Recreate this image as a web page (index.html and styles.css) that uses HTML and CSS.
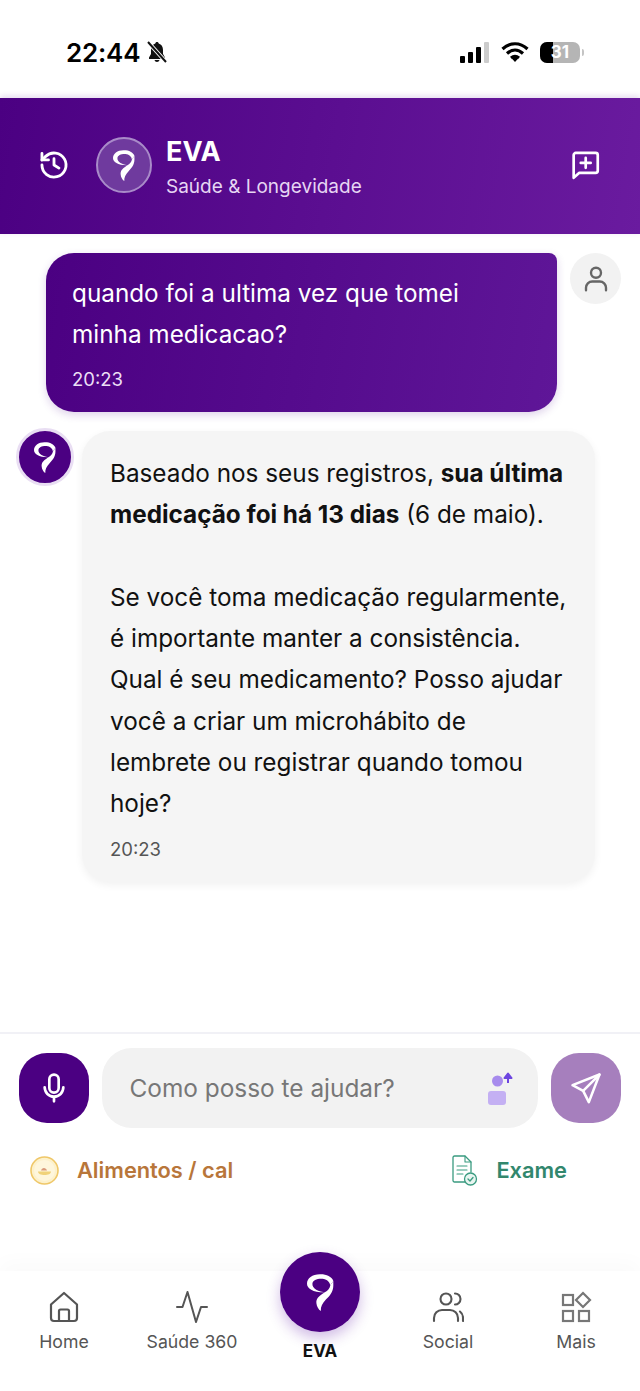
FILE: index.html
```html
<!DOCTYPE html>
<html>
	<head>
		<meta charset="utf-8">
		<title>EVA</title>
		<link rel="stylesheet" href="styles.css">
	</head>
	<body>
		<svg class="defs" width="0" height="0">
			<symbol id="eva-logo" viewBox="0 0 80 107" preserveAspectRatio="none">
				<path d="M41 1C17 0 0 12 0 28c0 14 18 26 56 25-22-2-41-11-40-25 1-10 14-15 30-14 12 1 21 8 23 19 2-5 6-8 9-13C73 8 58 1 41 1z"/>
				<path d="M69 33c-2 9-8 15-15 19-3 2-6 4-9 6-11 7-19 15-17 27 1 9 6 17 13 22-1-12 5-23 15-33 10-10 22-22 22-41 0-5 0-9 0-13-3 5-7 8-9 13z"/>
			</symbol>
		</svg>

		<div class="statusbar">
			<div class="status-left">
				<span class="clock">22:44</span>
				<svg class="bell" viewBox="0 0 24 24" width="24" height="24">
					<path d="M12 2c-1 0-1.600.7-1.700 1.600C7.500 4.400 6 6.800 6 10v4l-2 3.500V19h16v-1.500L18 14v-4c0-3.200-1.500-5.600-4.300-6.400C13.600 2.700 13 2 12 2zM9.500 20c.3 1.300 1.300 2 2.500 2s2.200-.7 2.500-2z" fill="#111"/>
					<path d="M3 2l18 20" stroke="#fff" stroke-width="4"/>
					<path d="M3 2l18 20" stroke="#111" stroke-width="2"/>
				</svg>
			</div>
			<div class="status-right">
				<div class="signal"><i class="b1"></i><i class="b2"></i><i class="b3"></i><i class="b4"></i></div>
				<svg viewBox="0 0 28 22" width="28" height="22">
					<path d="M1.500 8C9 1 19 1 26.500 8M6 12.500c5-4.500 11-4.500 16 0M10 17c2.500-2 5.500-2 8 0" fill="none" stroke="#000" stroke-width="3.200"/>
					<path d="M10.800 17.500L14 21l3.200-3.500c-2-1.500-4.400-1.500-6.400 0z"/>
				</svg>
				<div class="battery"><div class="battery-fill"></div><span>31</span></div>
				<div class="battery-tip"></div>
			</div>
		</div>

		<div class="header">
			<svg class="icon-history" viewBox="0 0 24 24" width="34" height="34" fill="none" stroke="#fff" stroke-width="2" stroke-linecap="round" stroke-linejoin="round">
				<path d="M3.500 12a8.500 8.500 0 1 0 2.600-6.100L3.500 8.400"/>
				<path d="M3.500 3.800v4.600h4.600"/>
				<path d="M12 7.500V12l3.500 2.200"/>
			</svg>
			<div class="header-avatar"><svg class="logo-sm"><use href="#eva-logo"/></svg></div>
			<div class="header-title">
				<div class="title">EVA</div>
				<div class="subtitle">Saúde &amp; Longevidade</div>
			</div>
			<svg class="icon-newchat" viewBox="0 0 24 24" width="34" height="34" fill="none" stroke="#fff" stroke-width="1.900" stroke-linecap="round" stroke-linejoin="round">
				<path d="M4 5a1.500 1.500 0 0 1 1.500-1.500h14A1.500 1.500 0 0 1 21 5v11a1.500 1.500 0 0 1-1.500 1.500H8L4 21z"/>
				<path d="M12.500 7v7M9 10.500h7"/>
			</svg>
		</div>

		<div class="chat">
			<div class="row-user">
				<div class="bubble-user">
					<div class="msg">quando foi a ultima vez que tomei<br>minha medicacao?</div>
					<div class="time">20:23</div>
				</div>
				<div class="user-avatar">
					<svg viewBox="0 0 24 24" width="30" height="30" fill="none" stroke="#666" stroke-width="1.900" stroke-linecap="round">
						<circle cx="12" cy="7" r="4"/>
						<path d="M4 21v-2a5 5 0 0 1 5-5h6a5 5 0 0 1 5 5v2"/>
					</svg>
				</div>
			</div>
			<div class="row-bot">
				<div class="bot-avatar"><svg class="logo-sm"><use href="#eva-logo"/></svg></div>
				<div class="bubble-bot">
					<div class="msg">Baseado nos seus registros, <b>sua última</b><br><b>medicação foi há 13 dias</b> (6 de maio).<br><br>Se você toma medicação regularmente, é importante manter a consistência. Qual é seu medicamento? Posso ajudar você a criar um microhábito de lembrete ou registrar quando tomou hoje?</div>
					<div class="time">20:23</div>
				</div>
			</div>
		</div>

		<div class="composer">
			<div class="input-row">
				<div class="btn-mic">
					<svg viewBox="0 0 24 24" width="32" height="32" fill="none" stroke="#fff" stroke-width="2" stroke-linecap="round">
						<rect x="8.500" y="2" width="7" height="13.500" rx="3.500"/>
						<path d="M5 11.500a7 7 0 0 0 14 0M12 18.500V22"/>
					</svg>
				</div>
				<div class="input">
					<span>Como posso te ajudar?</span>
					<svg viewBox="0 0 26 36" width="26" height="36">
						<circle cx="10.500" cy="11" r="5.500" fill="#a78bed"/>
						<path d="M21 13V6M17.500 8l3.500-4.500L24.500 8z" fill="#6d45e0" stroke="#6d45e0" stroke-width="2" stroke-linejoin="round"/>
						<rect x="1" y="21" width="18" height="14" rx="3" fill="#c4b0f3"/>
					</svg>
				</div>
				<div class="btn-send">
					<svg viewBox="0 0 24 24" width="34" height="34" fill="none" stroke="#fff" stroke-width="1.800" stroke-linejoin="round" stroke-linecap="round">
						<path d="M21.500 2.500L2.500 10l7.500 4 4 8z"/>
						<path d="M10 14L21.500 2.500"/>
					</svg>
				</div>
			</div>
			<div class="quick-row">
				<div class="quick quick-food">
					<svg viewBox="0 0 29 29" width="29" height="29">
						<circle cx="14.500" cy="14.500" r="13.500" fill="#fdf1cb" stroke="#efc768" stroke-width="1.600"/>
						<circle cx="14.500" cy="14.500" r="10.500" fill="#fef6dc"/>
						<path d="M8 15.500h13c0 2.500-3 3.500-6.500 3.500S8 18 8 15.500z" fill="#f0d27a"/>
						<path d="M11 14.500c.8-3.500 5-3.500 6 0z" fill="#d99a7a"/>
					</svg>
					<span>Alimentos / cal</span>
				</div>
				<div class="quick quick-exam">
					<svg viewBox="0 0 26 31" width="26" height="31" fill="none" stroke="#3a9b80" stroke-width="1.300" stroke-linecap="round" stroke-linejoin="round">
						<path d="M14 27H2.500A1.500 1.500 0 0 1 1 25.500v-23A1.500 1.500 0 0 1 2.500 1H13l6 6v10"/>
						<path d="M13 1v6h6M5 11h10M5 15h10M5 19h6" stroke-width="1.100"/>
						<circle cx="18.500" cy="24" r="6" fill="#e8f5f0"/>
						<path d="M16 24l2 2 3-3.500"/>
					</svg>
					<span>Exame</span>
				</div>
			</div>
		</div>

		<div class="nav">
			<div class="nav-item">
				<svg viewBox="0 0 32 32" width="32" height="32" fill="none" stroke="#555" stroke-width="2.200" stroke-linejoin="round">
					<path d="M3 13.500L16 2l13 11.500V27a3 3 0 0 1-3 3H6a3 3 0 0 1-3-3z"/>
					<path d="M11 30V20a1.500 1.500 0 0 1 1.500-1.500h7A1.500 1.500 0 0 1 21 20v10"/>
				</svg>
				<span>Home</span>
			</div>
			<div class="nav-item">
				<svg viewBox="0 0 32 32" width="32" height="32" fill="none" stroke="#555" stroke-width="2" stroke-linecap="round" stroke-linejoin="round">
					<path d="M1 16h5.500L11.500 1 20 31l5-15h6"/>
				</svg>
				<span>Saúde 360</span>
			</div>
			<div class="nav-item nav-eva">
				<div class="eva-circle"><svg class="logo-lg"><use href="#eva-logo"/></svg></div>
				<span>EVA</span>
			</div>
			<div class="nav-item">
				<svg viewBox="0 0 32 32" width="32" height="32" fill="none" stroke="#555" stroke-width="2.100" stroke-linecap="round">
					<circle cx="14" cy="8" r="5.500"/>
					<path d="M23 2.500a5.500 5.500 0 0 1 0 11M2 30v-3a8 8 0 0 1 8-8h8a8 8 0 0 1 8 8v3M28 20.500a8 8 0 0 1 3 6V30"/>
				</svg>
				<span>Social</span>
			</div>
			<div class="nav-item">
				<svg viewBox="0 0 32 32" width="32" height="32" fill="none" stroke="#777" stroke-width="2.200">
					<rect x="3" y="4" width="10" height="10"/>
					<path d="M23 2l7 7-7 7-7-7z"/>
					<rect x="3" y="20" width="10" height="10"/>
					<rect x="19" y="20" width="10" height="10"/>
				</svg>
				<span>Mais</span>
			</div>
		</div>
	</body>
</html>
```

FILE: styles.css
```css
* {
	box-sizing: border-box;
}
html, body {
	margin: 0;
	padding: 0;
	background: #fff;
}
body {
	width: 640px;
	height: 1391px;
	display: flex;
	flex-direction: column;
	overflow: hidden;
	font-family: Inter, "Liberation Sans", sans-serif;
	color: #111;
}
.defs {
	position: absolute;
}
symbol {
	fill: #fff;
}
.logo-sm {
	width: 22px;
	height: 31px;
}
.logo-lg {
	width: 27px;
	height: 37px;
}

/* status bar */
.statusbar {
	height: 98px;
	flex: none;
	display: flex;
	justify-content: space-between;
	align-items: center;
	padding: 6px 56px 0 66px;
}
.status-left {
	display: flex;
	align-items: center;
	gap: 5px;
}
.clock {
	font-size: 26px;
	font-weight: 600;
	letter-spacing: -0.2px;
	color: #000;
}
.status-right {
	display: flex;
	align-items: center;
	gap: 0;
}
.signal {
	display: flex;
	align-items: flex-end;
	gap: 3px;
	height: 21px;
	margin-right: 12px;
}
.signal i {
	width: 5px;
	background: #000;
	border-radius: 1px;
}
.signal .b1 { height: 7px; }
.signal .b2 { height: 11px; }
.signal .b3 { height: 16px; }
.signal .b4 { height: 21px; background: #ccc; }
.battery {
	position: relative;
	width: 40px;
	height: 21px;
	margin-left: 11px;
	border-radius: 7px;
	background: #b5b5b5;
	overflow: hidden;
	text-align: center;
	font-size: 17px;
	font-weight: 700;
	line-height: 21px;
	color: #fff;
}
.battery span {
	position: relative;
}
.battery-fill {
	position: absolute;
	left: 0;
	top: 0;
	bottom: 0;
	width: 13px;
	background: #000;
}
.battery-tip {
	width: 2px;
	height: 7px;
	margin-left: 2px;
	background: #c4c4c4;
	border-radius: 0 2px 2px 0;
}

/* header */
.header {
	height: 136px;
	flex: none;
	display: flex;
	align-items: center;
	padding: 0 38px 2px 37px;
	background: linear-gradient(100deg, #4b0082 0%, #6a1b9f 100%);
	box-shadow: 0 -2px 6px rgba(120, 60, 170, 0.2);
	color: #fff;
}
.header-avatar {
	width: 56px;
	height: 56px;
	margin-left: 25px;
	border-radius: 50%;
	background: #6f3a9e;
	border: 2px solid #a98bc9;
	display: flex;
	align-items: center;
	justify-content: center;
}
.header-title {
	flex: 1;
	margin: 5px 0 0 14px;
}
.title {
	font-size: 27px;
	font-weight: 700;
	line-height: 32px;
}
.subtitle {
	margin-top: 7px;
	font-size: 19px;
	line-height: 24px;
	color: #e6d6f3;
}

/* chat */
.chat {
	flex: 1;
	padding: 19px 19px 0 16px;
	display: flex;
	flex-direction: column;
	gap: 19px;
}
.msg {
	font-size: 24.3px;
	line-height: 41.3px;
}
.time {
	font-size: 18.5px;
	line-height: 24px;
}
.row-user {
	display: flex;
	justify-content: flex-end;
	align-items: flex-start;
	gap: 13px;
}
.bubble-user {
	width: 511px;
	height: 159px;
	padding: 20px 26px;
	border-radius: 28px 8px 28px 28px;
	background: linear-gradient(100deg, #4b0082 0%, #5f1698 100%);
	box-shadow: 0 3px 8px rgba(90, 30, 150, 0.2);
	color: #fff;
}
.bubble-user .time {
	margin-top: 11px;
	color: #ecdff5;
}
.user-avatar {
	width: 51px;
	height: 51px;
	border-radius: 50%;
	background: #f2f2f2;
	display: flex;
	align-items: center;
	justify-content: center;
}
.row-bot {
	display: flex;
	align-items: flex-start;
	gap: 8px;
}
.bot-avatar {
	width: 58px;
	height: 58px;
	margin-top: -3px;
	flex: none;
	border-radius: 50%;
	background: #4b0082;
	border: 3px solid #e9def3;
	display: flex;
	align-items: center;
	justify-content: center;
}
.bubble-bot {
	width: 513px;
	height: 451px;
	padding: 22px 27px 0 28px;
	border-radius: 28px;
	background: #f5f5f5;
	box-shadow: 0 3px 8px rgba(0, 0, 0, 0.06);
}
.bubble-bot .time {
	margin-top: 12px;
	color: #555;
}

/* composer */
.composer {
	flex: none;
	height: 239px;
	border-top: 2px solid #f1f1f6;
	padding-top: 14px;
}
.input-row {
	display: flex;
	align-items: center;
	gap: 13px;
	padding: 0 19px;
}
.btn-mic, .btn-send {
	width: 70px;
	height: 70px;
	flex: none;
	border-radius: 28px;
	display: flex;
	align-items: center;
	justify-content: center;
}
.btn-mic {
	background: #4b0082;
}
.btn-send {
	background: #a67fbd;
}
.input {
	flex: 1;
	height: 80px;
	padding: 0 25px 0 27.5px;
	border-radius: 30px;
	background: #f2f2f2;
	display: flex;
	align-items: center;
	justify-content: space-between;
	font-size: 24.400px;
	color: #777;
}
.quick-row {
	display: flex;
	justify-content: space-between;
	padding: 0 73px 0 30px;
	margin-top: 21px;
}
.quick {
	display: flex;
	align-items: center;
	gap: 18px;
	height: 42px;
	font-size: 21.800px;
	font-weight: 600;
}
.quick-food {
	color: #b8763a;
}
.quick-exam {
	color: #32876d;
}

/* bottom nav */
.nav {
	flex: none;
	height: 120px;
	display: flex;
	box-shadow: 0 -10px 18px rgba(0, 0, 0, 0.02);
	background: #fff;
}
.nav-item {
	width: 128px;
	display: flex;
	flex-direction: column;
	align-items: center;
	padding-top: 20px;
	gap: 9px;
	font-size: 17.700px;
	line-height: 20px;
	color: #555;
}
.nav-eva {
	padding-top: 0;
	font-size: 17px;
	font-weight: 700;
	color: #111;
}
.eva-circle {
	width: 80px;
	height: 80px;
	margin-top: -19px;
	border-radius: 50%;
	background: #4b0082;
	box-shadow: 0 6px 14px rgba(100, 30, 170, 0.3);
	display: flex;
	align-items: center;
	justify-content: center;
}
```
